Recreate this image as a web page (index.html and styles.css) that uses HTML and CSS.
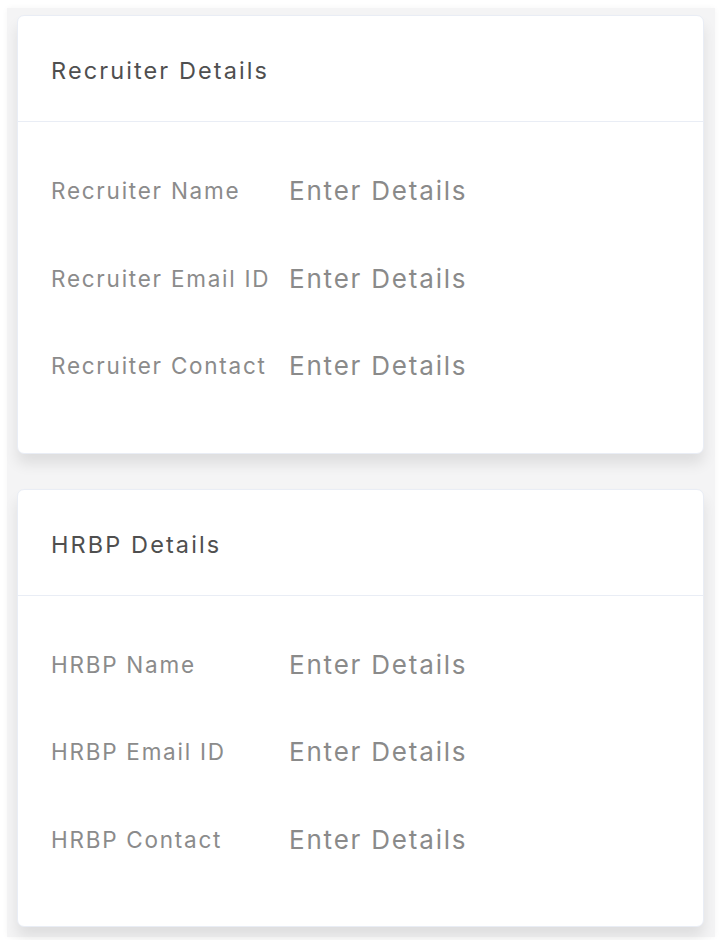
FILE: index.html
```html
<!DOCTYPE html>
<html>
<head>
<meta charset="utf-8">
<link rel="stylesheet" href="styles.css">
</head>
<body>
<div class="wrap">
  <section class="card">
    <div class="card-head">Recruiter Details</div>
    <div class="card-body">
      <div class="row"><span class="label">Recruiter Name</span><span class="value">Enter Details</span></div>
      <div class="row"><span class="label">Recruiter Email ID</span><span class="value">Enter Details</span></div>
      <div class="row"><span class="label">Recruiter Contact</span><span class="value">Enter Details</span></div>
    </div>
  </section>
  <section class="card">
    <div class="card-head">HRBP Details</div>
    <div class="card-body">
      <div class="row"><span class="label">HRBP Name</span><span class="value">Enter Details</span></div>
      <div class="row"><span class="label">HRBP Email ID</span><span class="value">Enter Details</span></div>
      <div class="row"><span class="label">HRBP Contact</span><span class="value">Enter Details</span></div>
    </div>
  </section>
</div>
</body>
</html>
```
FILE: styles.css
```css
html, body { margin: 0; padding: 0; background: #ffffff; }
body { font-family: "Inter", "Open Sans", sans-serif; }
.wrap {
  margin: 8px 11px 5px 7px;
  background: #f4f4f5;
  padding: 7px 11px 10px 10px;
  display: flex;
  flex-direction: column;
  gap: 35px;
  box-shadow: 0 0 6px rgba(0,0,0,0.04);
}
.card {
  background: #ffffff;
  border: 1px solid #e9edf5;
  border-radius: 7px;
  box-shadow: 0 10px 14px rgba(0,0,0,0.09);
}
.card-head {
  height: 106px;
  box-sizing: border-box;
  padding: 4px 0 0 33px;
  display: flex;
  align-items: center;
  border-bottom: 1px solid #e9edf5;
  font-size: 23.5px;
  letter-spacing: 2.1px;
  color: #4f4f4f;
}
.card-body {
  padding: 25px 0 43px 33px;
  display: flex;
  flex-direction: column;
}
.row {
  height: 87.5px;
  display: flex;
  align-items: center;
}
.label {
  min-width: 220px;
  margin-right: 18px;
  font-size: 22.5px;
  letter-spacing: 1.75px;
  color: #8b8b8b;
  white-space: nowrap;
}
.value {
  font-size: 26px;
  letter-spacing: 1.8px;
  color: #8a8a8a;
}
```
